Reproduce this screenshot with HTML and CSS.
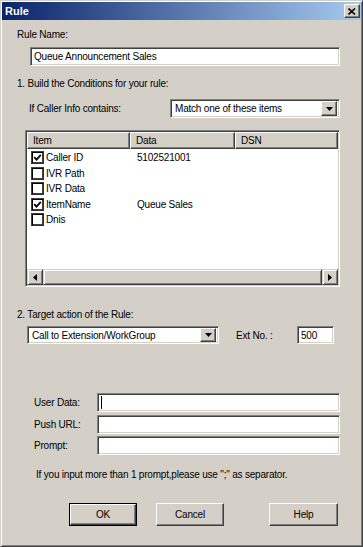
FILE: index.html
```html
<!DOCTYPE html>
<html>
<head>
<meta charset="utf-8">
<link rel="stylesheet" href="styles.css">
</head>
<body>
<div class="window">
  <div class="titlebar">
    <span class="title">Rule</span>
    <span class="close-btn"><svg width="8" height="7" viewBox="0 0 8 7"><path d="M0.5 0.5 L7 6.5 M7 0.5 L0.5 6.5" stroke="#000" stroke-width="1.6" fill="none"/></svg></span>
  </div>
  <div class="content">
    <div class="label l-rulename">Rule Name:</div>
    <div class="field f-rulename">Queue Announcement Sales</div>

    <div class="label l-section1">1. Build the Conditions for your rule:</div>
    <div class="row r-contains">
      <span class="label l-contains">If Caller Info contains:</span>
      <div class="combo c-match">
        <span class="combo-text">Match one of these items</span>
        <span class="drop-btn"><svg width="7" height="4" viewBox="0 0 7 4"><polygon points="0,0 7,0 3.5,4" fill="#000"/></svg></span>
      </div>
    </div>

    <div class="listview">
      <div class="lv-header">
        <div class="lv-col c-item">Item</div>
        <div class="lv-col c-data">Data</div>
        <div class="lv-col c-dsn">DSN</div>
      </div>
      <div class="lv-body">
        <div class="lv-row"><span class="cb checked"><svg width="9" height="9" viewBox="0 0 9 9"><polyline points="1.2,4.2 3.5,6.6 7.8,1.8" stroke="#000" stroke-width="1.8" fill="none"/></svg></span><span class="item-name">Caller ID</span><span class="item-data">5102521001</span></div>
        <div class="lv-row"><span class="cb"></span><span class="item-name">IVR Path</span><span class="item-data"></span></div>
        <div class="lv-row"><span class="cb"></span><span class="item-name">IVR Data</span><span class="item-data"></span></div>
        <div class="lv-row"><span class="cb checked"><svg width="9" height="9" viewBox="0 0 9 9"><polyline points="1.2,4.2 3.5,6.6 7.8,1.8" stroke="#000" stroke-width="1.8" fill="none"/></svg></span><span class="item-name">ItemName</span><span class="item-data">Queue Sales</span></div>
        <div class="lv-row"><span class="cb"></span><span class="item-name">Dnis</span><span class="item-data"></span></div>
      </div>
      <div class="hscroll">
        <span class="sb-btn"><svg width="4" height="7" viewBox="0 0 4 7"><polygon points="4,0 4,7 0,3.5" fill="#000"/></svg></span>
        <span class="sb-thumb"></span>
        <span class="sb-btn"><svg width="4" height="7" viewBox="0 0 4 7"><polygon points="0,0 0,7 4,3.5" fill="#000"/></svg></span>
      </div>
    </div>

    <div class="label l-section2">2. Target action of the Rule:</div>
    <div class="row r-target">
      <div class="combo c-target">
        <span class="combo-text">Call to Extension/WorkGroup</span>
        <span class="drop-btn"><svg width="7" height="4" viewBox="0 0 7 4"><polygon points="0,0 7,0 3.5,4" fill="#000"/></svg></span>
      </div>
      <span class="label l-ext">Ext No. :</span>
      <div class="field f-ext">500</div>
    </div>

    <div class="form-grid">
      <span class="label">User Data:</span>
      <div class="field f-wide"><span class="caret"></span></div>
      <span class="label">Push URL:</span>
      <div class="field f-wide"></div>
      <span class="label">Prompt:</span>
      <div class="field f-wide"></div>
    </div>

    <div class="label note">If you input more than 1 prompt,please use ";" as separator.</div>

    <div class="buttons">
      <div class="btn default"><span class="btn-inner">OK</span></div>
      <div class="btn b-cancel"><span class="btn-inner">Cancel</span></div>
      <div class="btn b-help"><span class="btn-inner">Help</span></div>
    </div>
  </div>
</div>
</body>
</html>
```

FILE: styles.css
```css
* { box-sizing: border-box; }

body {
  margin: 0;
  background: #d4d0c8;
  font-family: "Liberation Sans", Arial, sans-serif;
  font-size: 10px;
  letter-spacing: -0.2px;
  color: #000;
}

.window {
  width: 363px;
  height: 547px;
  background: #d4d0c8;
  border: 1px solid;
  border-color: #d4d0c8 #404040 #404040 #d4d0c8;
  box-shadow: inset 1px 1px #fff, inset -1px -1px #808080;
  padding: 1px 1px 2px 1px;
  display: flex;
  flex-direction: column;
}

.titlebar {
  height: 18px;
  background: linear-gradient(to right, #0a246a, #a6caf0);
  display: flex;
  align-items: center;
  justify-content: space-between;
  padding: 0 1px 0 3px;
}

.title {
  color: #fff;
  font-weight: bold;
  font-size: 11px;
  letter-spacing: 0;
}

.close-btn {
  width: 16px;
  height: 14px;
  background: #d4d0c8;
  border: 1px solid;
  border-color: #fff #404040 #404040 #fff;
  box-shadow: inset -1px -1px #808080;
  display: flex;
  align-items: center;
  justify-content: center;
}

.content {
  display: flex;
  flex-direction: column;
  align-items: flex-start;
  padding: 8px 0 0 0;
}

.label {
  line-height: 13px;
  white-space: nowrap;
}

.field {
  background: #fff;
  border: 1px solid;
  border-color: #808080 #fff #fff #808080;
  box-shadow: inset 1px 1px #404040, inset -1px -1px #d4d0c8;
  padding: 0 3px;
  display: flex;
  align-items: center;
  white-space: nowrap;
}

.l-rulename { margin-left: 15px; }

.f-rulename {
  margin: 6px 0 0 28px;
  width: 310px;
  height: 19px;
}

.l-section1 { margin: 11px 0 0 15px; }

.row {
  display: flex;
  align-items: center;
}

.r-contains { margin: 9px 0 0 27px; }
.l-contains { width: 141px; }

.combo {
  background: #fff;
  border: 1px solid;
  border-color: #808080 #fff #fff #808080;
  box-shadow: inset 1px 1px #404040, inset -1px -1px #d4d0c8;
  padding: 2px 2px 2px 4px;
  display: flex;
  align-items: center;
  justify-content: space-between;
}

.c-match { width: 170px; height: 19px; }

.combo-text { white-space: nowrap; }

.drop-btn {
  width: 16px;
  height: 15px;
  background: #d4d0c8;
  border: 1px solid;
  border-color: #fff #404040 #404040 #fff;
  box-shadow: inset -1px -1px #808080;
  display: flex;
  align-items: center;
  justify-content: center;
  flex: none;
}

.c-target .drop-btn { height: 14px; }

.listview {
  margin: 12px 0 0 23px;
  width: 315px;
  height: 157px;
  background: #fff;
  border: 1px solid;
  border-color: #808080 #fff #fff #808080;
  box-shadow: inset 1px 1px #404040, inset -1px -1px #d4d0c8;
  padding: 1px;
  display: flex;
  flex-direction: column;
}

.lv-header {
  display: grid;
  grid-template-columns: 103px 105px 1fr;
  height: 17px;
}

.lv-col {
  background: #d4d0c8;
  border: 1px solid;
  border-color: #fff #404040 #404040 #fff;
  box-shadow: inset -1px -1px #808080;
  padding: 0 5px;
  display: flex;
  align-items: center;
  line-height: 13px;
}

.lv-body {
  flex: 1;
  padding-top: 1px;
}

.lv-row {
  height: 15.5px;
  display: flex;
  align-items: center;
}

.cb {
  width: 13px;
  height: 13px;
  margin-left: 4px;
  background: #fff;
  border: 1px solid;
  border-color: #404040 #303030 #303030 #404040;
  box-shadow: inset 1px 1px #000, inset -1px -1px #404040;
  display: flex;
  align-items: center;
  justify-content: center;
  flex: none;
}

.item-name {
  width: 93px;
  padding-left: 2px;
  white-space: nowrap;
}

.item-data { white-space: nowrap; }

.hscroll {
  height: 16px;
  display: flex;
  background: #e8e6e1;
}

.sb-btn {
  width: 16px;
  height: 16px;
  background: #d4d0c8;
  border: 1px solid;
  border-color: #d4d0c8 #404040 #404040 #d4d0c8;
  box-shadow: inset 1px 1px #fff, inset -1px -1px #808080;
  display: flex;
  align-items: center;
  justify-content: center;
  flex: none;
}

.sb-thumb {
  flex: 1;
  background: #d4d0c8;
  border: 1px solid;
  border-color: #d4d0c8 #404040 #404040 #d4d0c8;
  box-shadow: inset 1px 1px #fff, inset -1px -1px #808080;
}

.l-section2 { margin: 21px 0 0 15px; }

.r-target { margin: 5px 0 0 25px; }

.c-target { width: 192px; height: 18px; padding: 1px 2px 1px 4px; }

.l-ext { margin-left: 17px; width: 61px; }

.f-ext { width: 37px; height: 18px; }

.form-grid {
  margin: 49px 0 0 32px;
  display: grid;
  grid-template-columns: 63px 243px;
  row-gap: 2.5px;
  align-items: center;
}

.f-wide { height: 19px; }

.caret {
  width: 1px;
  height: 13px;
  background: #000;
}

.note { margin: 13px 0 0 34px; }

.buttons {
  margin: 22px 0 0 67px;
  display: flex;
}

.btn {
  width: 68px;
  height: 23px;
  background: #d4d0c8;
  border: 1px solid;
  border-color: #fff #404040 #404040 #fff;
  box-shadow: inset -1px -1px #808080;
  display: flex;
  align-items: center;
  justify-content: center;
}

.btn.default {
  border: 1px solid #000;
  box-shadow: none;
  padding: 0;
}

.btn.default .btn-inner {
  width: 100%;
  height: 100%;
  border: 1px solid;
  border-color: #fff #404040 #404040 #fff;
  box-shadow: inset -1px -1px #808080;
  display: flex;
  align-items: center;
  justify-content: center;
}

.b-cancel { margin-left: 19px; }
.b-help { margin-left: 45px; width: 69px; }
```
